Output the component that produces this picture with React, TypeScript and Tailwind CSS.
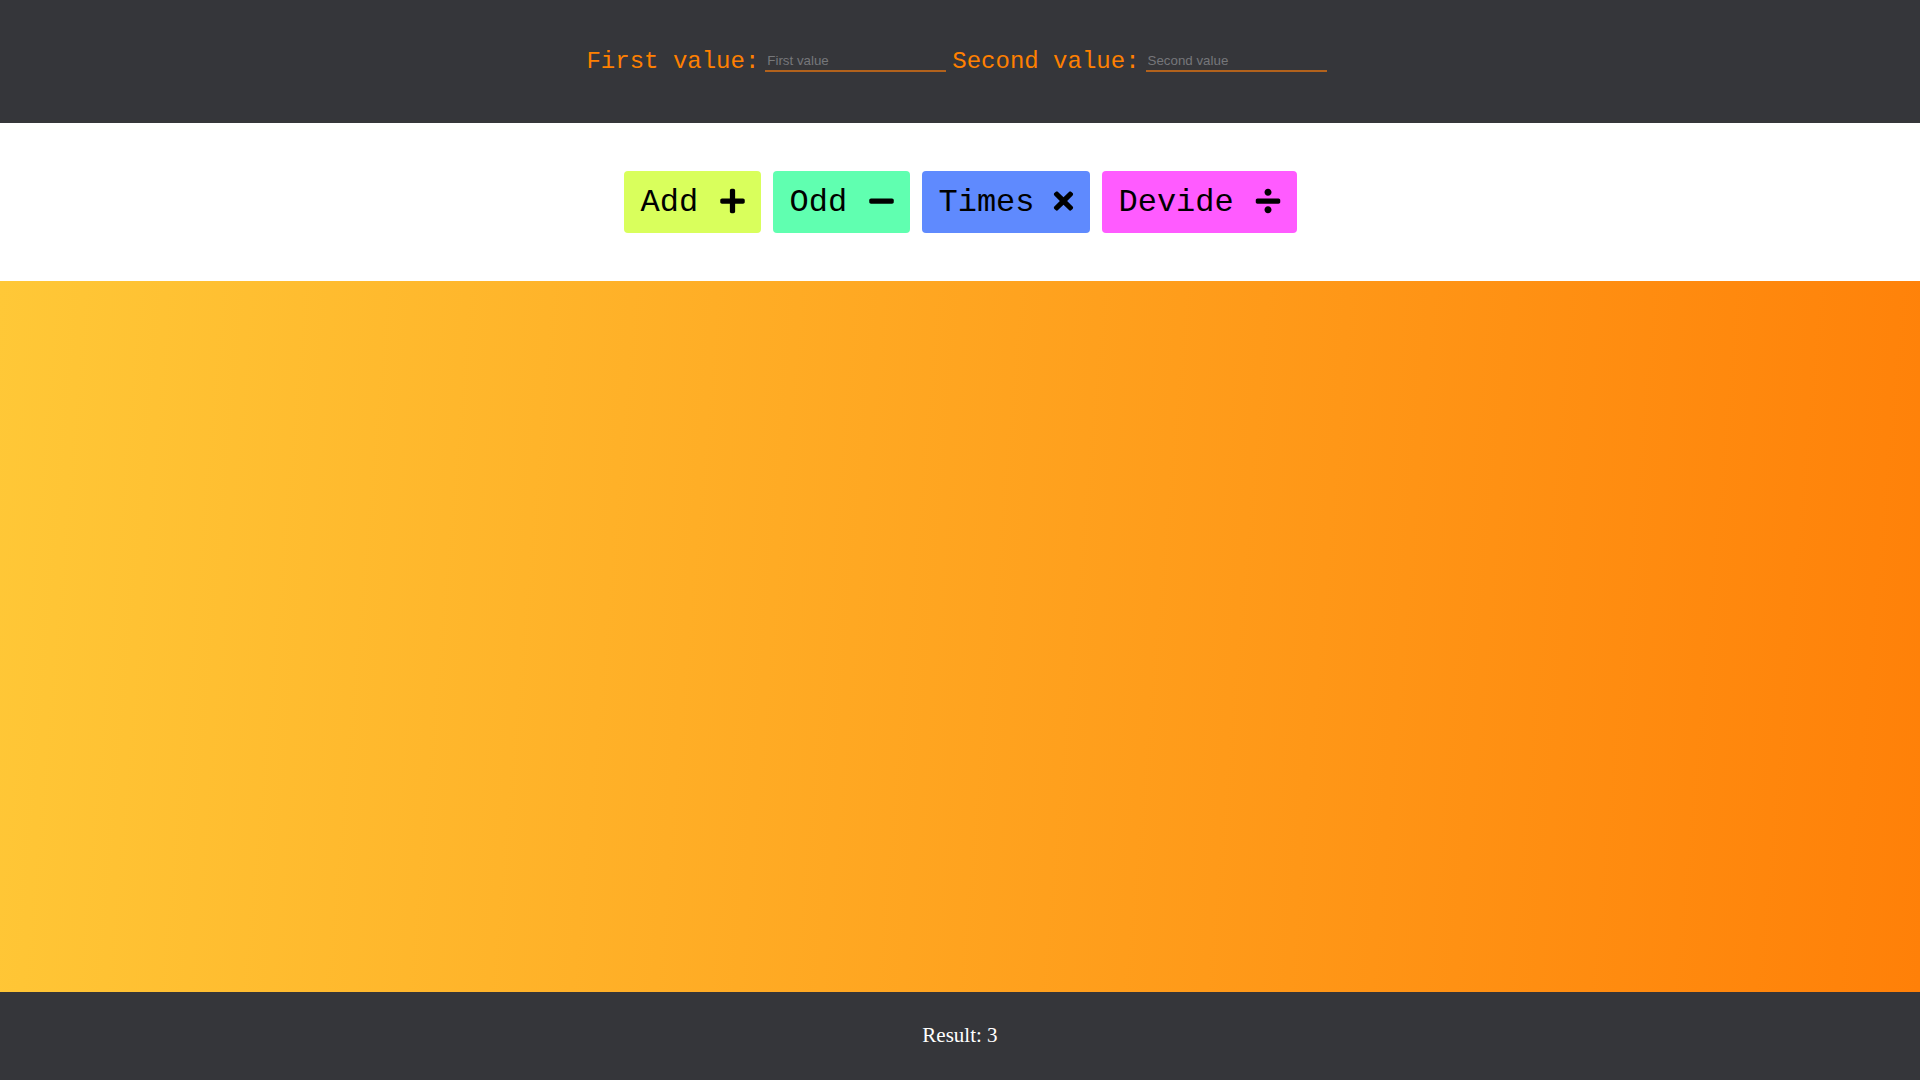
import React from "react";
import { FaPlus, FaMinus, FaTimes, FaDivide } from "react-icons/fa";

const mono = { fontFamily: '"Liberation Mono", monospace' } as React.CSSProperties;

function Btn({ label, cls, icon }: { label: string; cls: string; icon: React.ReactNode }) {
  return (
    <button
      className={`flex h-[62px] items-center justify-between rounded-[4px] pl-[17px] pr-[16px] text-[32px] text-black ${cls}`}
      style={mono}
    >
      <span className="mt-[2px]">{label}</span>
      {icon}
    </button>
  );
}

export default function App() {
  return (
    <div className="flex h-[1080px] w-[1920px] flex-col">
      <header className="flex h-[123px] items-center justify-center bg-[#35363a] pr-[7px]">
        <div className="flex items-center gap-[6px]">
          <span className="mt-[1px] text-[24px] text-[#ff8000]" style={mono}>First value:</span>
          <input
            placeholder="First value"
            className="-mt-[1px] h-[22px] w-[181px] border-b-2 border-[#b2621c] bg-transparent px-[2px] text-[13.33px] text-[#888] outline-none placeholder:text-[#76777a]"
            style={{ fontFamily: '"Liberation Sans", Arial, sans-serif' }}
          />
          <span className="mt-[1px] text-[24px] text-[#ff8000]" style={mono}>Second value:</span>
          <input
            placeholder="Second value"
            className="-mt-[1px] h-[22px] w-[181px] border-b-2 border-[#b2621c] bg-transparent px-[2px] text-[13.33px] text-[#888] outline-none placeholder:text-[#76777a]"
            style={{ fontFamily: '"Liberation Sans", Arial, sans-serif' }}
          />
        </div>
      </header>
      <section className="flex h-[158px] items-center justify-center gap-[12px] bg-white">
        <Btn label="Add" cls="w-[137px] bg-[#d9ff5c]" icon={<FaPlus size={28} className="-mt-[3px] w-[25px]" />} />
        <Btn label="Odd" cls="w-[137px] bg-[#60ffb0]" icon={<FaMinus size={28} className="-mt-[3px] w-[25px]" />} />
        <Btn label="Times" cls="w-[168px] bg-[#5f8afe]" icon={<FaTimes size={28} className="-mt-[3px] w-[21px]" />} />
        <Btn label="Devide" cls="w-[195px] bg-[#ff5bff]" icon={<FaDivide size={28} className="-mt-[3px] w-[26px]" />} />
      </section>
      <main className="h-[711px] bg-[linear-gradient(95deg,#ffc837,#ff8008)]" />
      <footer
        className="flex flex-1 items-center justify-center bg-[#35363a] text-[21px] text-white"
        style={{ fontFamily: '"Liberation Serif", "Times New Roman", serif' }}
      >
        Result: 3
      </footer>
    </div>
  );
}
